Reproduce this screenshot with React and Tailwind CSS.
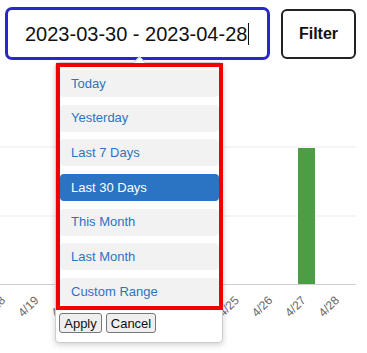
import React from "react";

const ranges = ["Today", "Yesterday", "Last 7 Days", "Last 30 Days", "This Month", "Last Month", "Custom Range"];
const labels = ["4/18", "4/19", "4/20", "4/21", "4/22", "4/23", "4/24", "4/25", "4/26", "4/27", "4/28"];

export default function App() {
  return (
    <div className="relative w-[367px] h-[353px] bg-white overflow-hidden" style={{ fontFamily: '"Liberation Sans", Arial, sans-serif' }}>
      <div className="flex items-start pt-[7px] pl-[5px] gap-[11px]">
        <div className="w-[265px] h-[53px] border-[3px] border-[#2828c8] rounded-[7px] flex items-center pl-[17px] text-[20px] text-[#111]">
          <span>2023-03-30 - 2023-04-28</span>
          <span className="w-px h-[22px] bg-[#111] ml-px"></span>
        </div>
        <button className="mt-[2px] w-[75px] h-[50px] border-2 border-[#222] rounded-[6px] bg-white font-bold text-[16px] text-[#111]">Filter</button>
      </div>

      <svg width="367" height="293" className="block">
        <line x1="0" y1="87" x2="356" y2="87" stroke="#ebebeb" strokeWidth="1" />
        <line x1="0" y1="156" x2="356" y2="156" stroke="#ebebeb" strokeWidth="1" />
        <line x1="0" y1="224.5" x2="356" y2="224.5" stroke="#cfcfcf" strokeWidth="1" />
        <rect x="298" y="88" width="17" height="136" fill="#4c9e45" />
        {labels.map((l, i) => {
          const x = 6 + i * 33.4;
          return (
            <text key={l} x={x} y={241} textAnchor="end" fontSize="12" fill="#666" transform={`rotate(-45 ${x} 241)`} fontFamily='"Liberation Sans", Arial, sans-serif'>
              {l}
            </text>
          );
        })}
      </svg>

      <div className="absolute left-[55px] top-[62px] w-[168px] h-[281px] bg-white border border-[#ccc] rounded-[4px] shadow-[0_2px_6px_rgba(0,0,0,0.18)]">
        <div className="absolute -top-[5px] left-[79px] w-[9px] h-[9px] rotate-45 bg-white border-l border-t border-[#ccc]"></div>
        <div className="relative w-[167px] h-[247px] border-4 border-[#f00000] pt-[3px] flex flex-col gap-[7.67px]">
          {ranges.map((r) => (
            <div
              key={r}
              className={
                r === "Last 30 Days"
                  ? "h-[27px] shrink-0 rounded-[4px] bg-[#2b74c4] text-white text-[13px] pl-[11px] flex items-center"
                  : "h-[27px] shrink-0 rounded-[4px] bg-[#f2f2f2] text-[#2f72c2] text-[13px] pl-[11px] flex items-center"
              }
            >
              {r}
            </div>
          ))}
        </div>
        <div className="flex gap-[4px] pl-[3px] pt-[3px]">
          <button className="w-[43px] h-[20px] border border-[#777] rounded-[3px] bg-[#efefef] text-[13px] text-[#111] leading-none">Apply</button>
          <button className="w-[50px] h-[20px] border border-[#777] rounded-[3px] bg-[#efefef] text-[13px] text-[#111] leading-none">Cancel</button>
        </div>
      </div>
    </div>
  );
}
